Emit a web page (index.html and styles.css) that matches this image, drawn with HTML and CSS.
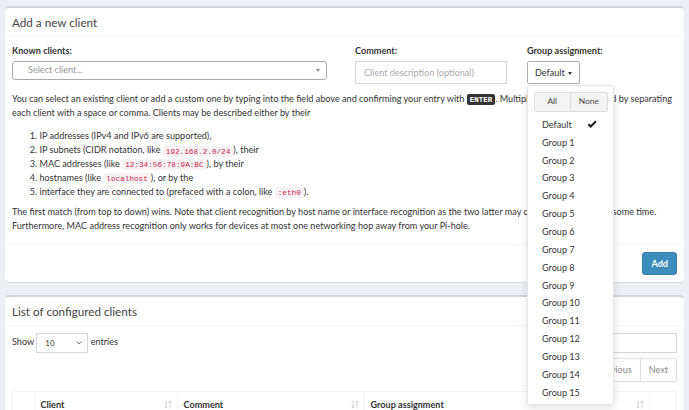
FILE: index.html
```html
<!DOCTYPE html>
<html lang="en">
<head>
  <meta charset="UTF-8" />
  <meta name="viewport" content="width=device-width, initial-scale=1.0"/>
  <title>Client group management</title>
  <link rel="stylesheet" href="styles.css">
</head>
<body>

<div class="content">

  <div class="box">
    <div class="box-header">
      <h3 class="box-title">Add a new client</h3>
    </div>
    <div class="box-body">
      <div class="form-row">
        <div class="form-group">
          <label>Known clients:</label>
          <div class="select2">
            <span class="select2-placeholder">Select client...</span>
            <span class="select2-arrow"></span>
          </div>
        </div>
        <div class="form-group">
          <label>Comment:</label>
          <input type="text" class="form-control" placeholder="Client description (optional)">
        </div>
        <div class="form-group">
          <label>Group assignment:</label>
          <div class="group-select">
            <button class="btn btn-default">Default <span class="caret"></span></button>
            <div class="dropdown-menu">
              <div class="actions-box">
                <button class="btn btn-light">All</button>
                <button class="btn btn-light">None</button>
              </div>
              <ul class="dropdown-items">
                <li class="selected">Default
                  <svg class="check" width="10" height="9" viewBox="0 0 10 9"><path d="M0.6 4.9 L2.1 3.4 L3.8 5.1 L8.2 0.6 L9.6 2 L3.8 7.9 Z" fill="#222"/></svg>
                </li>
                <li>Group 1</li>
                <li>Group 2</li>
                <li>Group 3</li>
                <li>Group 4</li>
                <li>Group 5</li>
                <li>Group 6</li>
                <li>Group 7</li>
                <li>Group 8</li>
                <li>Group 9</li>
                <li>Group 10</li>
                <li>Group 11</li>
                <li>Group 12</li>
                <li>Group 13</li>
                <li>Group 14</li>
                <li>Group 15</li>
              </ul>
            </div>
          </div>
        </div>
      </div>

      <p>You can select an existing client or add a custom one by typing into the field above and confirming your entry with <kbd>ENTER</kbd>. Multiple clients can be added by separating each client with a space or comma. Clients may be described either by their</p>
      <ol>
        <li>IP addresses (IPv4 and IPv6 are supported),</li>
        <li>IP subnets (CIDR notation, like <code>192.168.2.0/24</code>), their</li>
        <li>MAC addresses (like <code>12:34:56:78:9A:BC</code>), by their</li>
        <li>hostnames (like <code>localhost</code>), or by the</li>
        <li>interface they are connected to (prefaced with a colon, like <code>:eth0</code>).</li>
      </ol>
      <p class="last">The first match (from top to down) wins. Note that client recognition by host name or interface recognition as the two latter may only be available after some time. Furthermore, MAC address recognition only works for devices at most one networking hop away from your Pi-hole.</p>
    </div>
    <div class="box-footer">
      <button class="btn btn-primary">Add</button>
    </div>
  </div>

  <div class="box">
    <div class="box-header">
      <h3 class="box-title">List of configured clients</h3>
    </div>
    <div class="box-body">
      <div class="dt-top">
        <div class="dt-length">
          Show <span class="length-select">10
            <svg width="6" height="4" viewBox="0 0 6 4"><path d="M0.5 0.5 L3 3 L5.5 0.5" fill="none" stroke="#666" stroke-width="0.9"/></svg>
          </span> entries
        </div>
        <div class="dt-filter">
          Search: <input type="text" class="search-input">
        </div>
      </div>
      <div class="dt-paging">
        <span class="page-btn">Previous</span><span class="page-btn">Next</span>
      </div>
      <table class="dt-table">
        <thead>
          <tr>
            <th class="col-check"></th>
            <th class="col-client"><div class="th-inner">Client <svg class="sort" width="8" height="9" viewBox="0 0 8 9"><path d="M2 0.5 V8 M0.6 6.4 L2 8.2 L3.4 6.4 M6 8.5 V1 M4.6 2.6 L6 0.8 L7.4 2.6" fill="none" stroke="#cfcfcf" stroke-width="1"/></svg></div></th>
            <th class="col-comment"><div class="th-inner">Comment <svg class="sort" width="8" height="9" viewBox="0 0 8 9"><path d="M2 0.5 V8 M0.6 6.4 L2 8.2 L3.4 6.4 M6 8.5 V1 M4.6 2.6 L6 0.8 L7.4 2.6" fill="none" stroke="#cfcfcf" stroke-width="1"/></svg></div></th>
            <th class="col-group"><div class="th-inner">Group assignment <svg class="sort" width="8" height="9" viewBox="0 0 8 9"><path d="M2 0.5 V8 M0.6 6.4 L2 8.2 L3.4 6.4 M6 8.5 V1 M4.6 2.6 L6 0.8 L7.4 2.6" fill="none" stroke="#cfcfcf" stroke-width="1"/></svg></div></th>
            <th class="col-action"></th>
          </tr>
        </thead>
      </table>
    </div>
  </div>

</div>

</body>
</html>
```

FILE: styles.css
```css
body {
  margin: 0;
  background: #ecf0f5;
  font-family: Lato, "Noto Sans", sans-serif;
  font-size: 9.1px;
  line-height: 13.8px;
  color: #333;
}

.content {
  padding: 6px 5px;
}

.box {
  background: #fff;
  border-top: 2px solid #d2d6de;
  border-radius: 4px;
  box-shadow: 0 1px 1px rgba(0,0,0,0.1);
  margin-bottom: 13px;
}

.box-header {
  padding: 7px;
  border-bottom: 1px solid #f4f4f4;
}

.box-title {
  margin: 0;
  font-size: 11.7px;
  line-height: 14px;
  font-weight: normal;
  color: #444;
}

.box-body {
  padding: 7px;
}

.box-footer {
  border-top: 1px solid #f4f4f4;
  padding: 7px;
  text-align: right;
}

.form-row {
  display: grid;
  grid-template-columns: 323px 152px 1fr;
  column-gap: 20px;
  margin-bottom: 8px;
}

label {
  display: block;
  font-weight: bold;
  margin-bottom: 3px;
}

.select2 {
  width: 315px;
  height: 19px;
  box-sizing: border-box;
  border: 1px solid #aaa;
  border-radius: 3px;
  display: flex;
  align-items: center;
  justify-content: space-between;
  padding: 0 6px 0 15px;
}

.select2-placeholder {
  color: #999;
}

.select2-arrow {
  border-top: 3px solid #888;
  border-left: 2.5px solid transparent;
  border-right: 2.5px solid transparent;
}

.form-control {
  display: block;
  width: 100%;
  height: 23px;
  box-sizing: border-box;
  border: 1px solid #d2d6de;
  padding: 4px 8px;
  font-family: inherit;
  font-size: 9.1px;
  color: #555;
}

.form-control::placeholder {
  color: #aaa;
}

.btn {
  font-family: inherit;
  font-size: 9.1px;
  line-height: 13.8px;
  padding: 4px 8px;
  border-radius: 3px;
  border: 1px solid transparent;
  cursor: pointer;
}

.btn-default {
  background: #fff;
  border-color: #adadad;
  color: #333;
  border-radius: 2px;
  height: 23px;
  padding: 4px 7px;
}

.btn-primary {
  background: #3c8dbc;
  border-color: #367fa9;
  color: #fff;
  font-weight: bold;
  height: 23.5px;
}

.caret {
  display: inline-block;
  vertical-align: middle;
  border-top: 3px solid #333;
  border-left: 2.5px solid transparent;
  border-right: 2.5px solid transparent;
  margin-left: 1px;
}

.group-select {
  position: relative;
}

.dropdown-menu {
  position: absolute;
  top: 24px;
  left: 0;
  z-index: 10;
  width: 87px;
  box-sizing: border-box;
  background: #fff;
  border: 1px solid #e6e6e6;
  border-radius: 3px;
  box-shadow: 0 3px 8px rgba(0,0,0,0.12);
  padding: 3.5px 0 2px;
}

.actions-box {
  display: flex;
  padding: 3px 5.5px;
}

.btn-light {
  flex: 1;
  background: #f4f4f4;
  border: 1px solid #ddd;
  color: #444;
  font-size: 8.4px;
  padding: 2px 4px;
  height: 19.5px;
  border-radius: 0;
}

.btn-light:first-child {
  border-radius: 3px 0 0 3px;
}

.btn-light:last-child {
  border-radius: 0 3px 3px 0;
  border-left: none;
}

.dropdown-items {
  list-style: none;
  margin: 1px 0 0;
  padding: 0;
}

.dropdown-items li {
  height: 17.87px;
  line-height: 17.87px;
  padding: 0 14px;
  color: #333;
  white-space: nowrap;
  position: relative;
}

.check {
  position: absolute;
  left: 59px;
  top: 4px;
}

p {
  margin: 0 0 7px;
}

p.last {
  margin-bottom: 4px;
}

ol {
  margin: 10px 0 7px;
  padding-left: 27.5px;
}

code {
  font-family: "Liberation Mono", monospace;
  font-size: 7.7px;
  line-height: 1;
  color: #c7254e;
  background: #f9f2f4;
  padding: 1.5px 3px;
  border-radius: 3px;
}

kbd {
  font-family: "Liberation Mono", monospace;
  font-weight: bold;
  font-size: 7.5px;
  line-height: 1;
  background: #333;
  color: #fff;
  padding: 1.5px 3px;
  border-radius: 2px;
}

.dt-top {
  display: flex;
  justify-content: space-between;
  align-items: center;
  height: 20px;
}

.length-select {
  display: inline-flex;
  align-items: center;
  justify-content: space-between;
  width: 52px;
  height: 20px;
  box-sizing: border-box;
  border: 1px solid #d2d6de;
  padding: 0 5px 0 8px;
  font-size: 8px;
  vertical-align: middle;
}

.search-input {
  width: 100px;
  height: 20px;
  box-sizing: border-box;
  border: 1px solid #d2d6de;
  margin-left: 3px;
  vertical-align: middle;
}

.dt-paging {
  display: flex;
  justify-content: flex-end;
  margin-top: 5px;
}

.page-btn {
  border: 1px solid #ddd;
  padding: 4px 8px;
  color: #888;
  background: #fff;
}

.page-btn:first-child {
  border-radius: 3px 0 0 3px;
}

.page-btn:last-child {
  border-left: none;
  border-radius: 0 3px 3px 0;
}

.dt-table {
  width: 100%;
  table-layout: fixed;
  border-collapse: collapse;
  margin-top: 9px;
  border: 1px solid #f4f4f4;
}

.dt-table th {
  box-sizing: border-box;
  text-align: left;
  padding: 5.5px;
  border: 1px solid #f4f4f4;
  border-bottom-width: 2px;
}

.th-inner {
  display: flex;
  justify-content: space-between;
  align-items: center;
}

.col-check { width: 22px; }
.col-client { width: 143px; }
.col-comment { width: 187px; }
.col-group { width: 285px; }
```
